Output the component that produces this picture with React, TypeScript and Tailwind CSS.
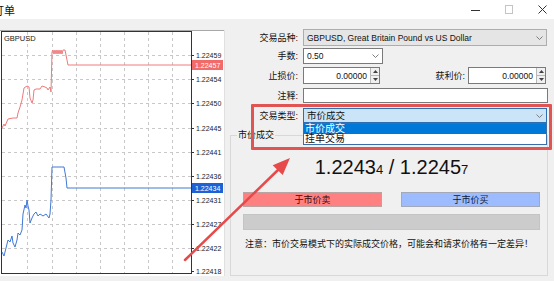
import React from "react";

const redPts =
  "2,128 4,124 5,126 8,119 13,118 17,118 18,113 20,107 22,100 24,88 27,86 29,87 30,98 32,103 33,100 34,90 36,89 40,89 42,86 45,87 47,88 48,90 50,87 51,92 52,52 53,50 54,54 55,50 56,54 57,50 58,54 59,50 60,54 61,50 62,54 63,50 65,50 67,60 68,65 191,65";
const bluePts =
  "2,252 4,256 6,248 8,240 10,242 12,236 13,243 15,247 17,240 18,233 20,235 22,230 23,214 25,205 26,208 27,200 28,206 29,210 30,223 32,218 34,214 36,212 38,216 40,214 43,216 46,214 49,218 50,214 51,200 52,167 64,167 66,178 67,188 191,188";

function Chart() {
  const vx = [27, 52, 76, 100, 124, 148, 172];
  const hy = [55, 79, 103, 128, 152, 176, 200, 224, 248];
  const labels: [number, string][] = [
    [55, "1.22459"],
    [79, "1.22454"],
    [103, "1.22450"],
    [128, "1.22445"],
    [152, "1.22441"],
    [176, "1.22436"],
    [200, "1.22431"],
    [224, "1.22427"],
    [248, "1.22422"],
    [271, "1.22418"],
  ];
  return (
    <svg width="225" height="246" viewBox="0 30 225 246" className="block">
      <rect x="0" y="30" width="225" height="246" fill="#ffffff" />
      <line x1="0" y1="30.5" x2="224" y2="30.5" stroke="#a8a8a8" />
      <line x1="224.5" y1="30" x2="224.5" y2="276" stroke="#e0e0e0" />
      {vx.map((x) => (
        <line key={"v" + x} x1={x + 0.5} y1="32" x2={x + 0.5} y2="273" stroke="#c8c8c8" strokeDasharray="3 3" />
      ))}
      {hy.map((y) => (
        <line key={"h" + y} x1="2" y1={y + 0.5} x2="191" y2={y + 0.5} stroke="#c8c8c8" strokeDasharray="3 3" />
      ))}
      <rect x="1.5" y="31.5" width="190" height="242" fill="none" stroke="#333333" />
      {labels.map(([y, t]) => (
        <g key={t}>
          <line x1="191" y1={y + 0.5} x2="194" y2={y + 0.5} stroke="#333" />
          <text x="196" y={y + 2.5} fontSize="7" fill="#222" fontFamily="Liberation Sans, sans-serif">
            {t}
          </text>
        </g>
      ))}
      <polyline points={redPts} fill="none" stroke="#f07a7a" strokeWidth="1" />
      <polyline points={bluePts} fill="none" stroke="#3f78d8" strokeWidth="1" />
      <rect x="192" y="60" width="31" height="10" fill="#f26b6b" />
      <text x="195" y="67.5" fontSize="7" fill="#fff" fontFamily="Liberation Sans, sans-serif">
        1.22457
      </text>
      <rect x="192" y="183" width="31" height="10" fill="#1d62d4" />
      <text x="195" y="190.5" fontSize="7" fill="#fff" fontFamily="Liberation Sans, sans-serif">
        1.22434
      </text>
      <text x="4" y="41" fontSize="7.5" fill="#222" fontFamily="Liberation Sans, sans-serif">
        GBPUSD
      </text>
    </svg>
  );
}

function Chevron() {
  return (
    <svg width="7" height="4" viewBox="0 0 7 4" className="block">
      <polyline points="0.5,0.5 3.5,3.5 6.5,0.5" fill="none" stroke="#707070" strokeWidth="0.9" />
    </svg>
  );
}

function Spin() {
  return (
    <div className="flex flex-col w-[9px] h-full border-l border-[#b8b8b8] bg-[#f0f0f0]">
      <div className="flex-1 flex items-center justify-center border-b border-[#b8b8b8]">
        <svg width="5" height="3" viewBox="0 0 5 3" className="block">
          <path d="M0 3 L2.5 0 L5 3Z" fill="#404040" />
        </svg>
      </div>
      <div className="flex-1 flex items-center justify-center">
        <svg width="5" height="3" viewBox="0 0 5 3" className="block">
          <path d="M0 0 L2.5 3 L5 0Z" fill="#404040" />
        </svg>
      </div>
    </div>
  );
}

function Label({ children }: { children: React.ReactNode }) {
  return <div className="w-[68px] text-right text-[9px] leading-[12px] text-[#111]">{children}</div>;
}

export default function App() {
  return (
    <div className="relative w-[554px] h-[281px] overflow-hidden bg-[#f0f0f0] flex flex-col font-['Liberation_Sans','Noto_Sans_CJK_SC',sans-serif] text-[#111]">
      {/* title bar */}
      <div className="h-[19px] bg-white flex items-center shrink-0">
        <div className="-ml-[7px] text-[11px] leading-[14px] text-[#111] font-['Noto_Sans_CJK_SC',sans-serif]">订单</div>
        <div className="ml-auto mr-[7px] flex items-center gap-[26px]">
          <svg width="9" height="9" viewBox="0 0 9 9" className="block">
            <line x1="0" y1="5.5" x2="9" y2="5.5" stroke="#333" />
          </svg>
          <svg width="8" height="9" viewBox="0 0 8 9" className="block -ml-[1px]">
            <rect x="0.5" y="0.5" width="7" height="8" fill="none" stroke="#c4c4c4" />
          </svg>
          <svg width="9" height="9" viewBox="0 0 9 9" className="block -ml-[1px]">
            <line x1="0.5" y1="0.5" x2="8.5" y2="8.5" stroke="#333" />
            <line x1="8.5" y1="0.5" x2="0.5" y2="8.5" stroke="#333" />
          </svg>
        </div>
      </div>

      {/* body */}
      <div className="flex flex-row flex-1">
        <div className="pt-[11px] w-[225px] shrink-0">
          <Chart />
        </div>

        <div className="ml-[5px] w-[324px] flex flex-col">
          {/* row 1 */}
          <div className="mt-[10px] flex items-center h-[17px]">
            <Label>交易品种:</Label>
            <div className="ml-[5px] w-[244px] h-[17px] flex items-center justify-between bg-[#e5e5e5] border border-[#adadad] px-[3px]">
              <span className="text-[8.5px] leading-[10px]">GBPUSD, Great Britain Pound vs US Dollar</span>
              <Chevron />
            </div>
          </div>
          {/* row 2 */}
          <div className="mt-[2px] flex items-center h-[16px]">
            <Label>手数:</Label>
            <div className="ml-[5px] w-[80px] h-[16px] flex items-center justify-between bg-white border border-[#7a7a7a] px-[3px]">
              <span className="text-[8.5px] leading-[10px]">0.50</span>
              <Chevron />
            </div>
          </div>
          {/* row 3 */}
          <div className="mt-[3px] flex items-center h-[17px]">
            <Label>止损价:</Label>
            <div className="ml-[5px] w-[77px] h-[17px] flex items-center bg-white border border-[#7a7a7a]">
              <span className="flex-1 text-right pr-[3px] text-[8.5px] leading-[10px]">0.00000</span>
              <Spin />
            </div>
            <div className="w-[85px] text-right text-[9px] leading-[12px]">获利价:</div>
            <div className="ml-[3px] w-[78px] h-[17px] flex items-center bg-white border border-[#7a7a7a]">
              <span className="flex-1 text-right pr-[3px] text-[8.5px] leading-[10px]">0.00000</span>
              <Spin />
            </div>
          </div>
          {/* row 4 */}
          <div className="mt-[4px] flex items-center h-[15px]">
            <Label>注释:</Label>
            <div className="ml-[5px] w-[245px] h-[15px] bg-white border border-[#7a7a7a]" />
          </div>
          {/* row 5 */}
          <div className="mt-[5px] flex items-center h-[15px] relative z-10">
            <Label>交易类型:</Label>
            <div className="relative ml-[5px] w-[244px] h-[15px] flex items-center justify-between bg-[#cce4f7] border border-[#2f6fb0] px-[3px]">
              <span className="text-[9.5px] leading-[12px]">市价成交</span>
              <Chevron />
              <div className="absolute left-[-1px] top-[14px] w-[244px] bg-white border border-[#3a6ea5] flex flex-col">
                <div className="h-[10px] bg-[#0078d7] text-white text-[10px] leading-[10px] px-[1px] overflow-visible whitespace-nowrap">市价成交</div>
                <div className="h-[10px] text-[10px] leading-[10px] px-[1px] whitespace-nowrap">挂单交易</div>
              </div>
            </div>
          </div>

          {/* group box */}
          <div className="mt-[12px] relative w-[318px] h-[141px] border border-[#d8d8d8] flex flex-col pl-[12px] pr-[7px]">
            <div className="absolute left-[6px] top-[-7px] bg-[#f0f0f0] px-[1px] text-[9px] leading-[12px]">市价成交</div>
            <div className="mt-[18px] h-[26px] flex items-baseline justify-center text-[#111]">
              <span className="text-[20px] leading-[26px]">1.2243</span>
              <span className="text-[13px]">4</span>
              <span className="text-[20px] leading-[26px] whitespace-pre"> / 1.2245</span>
              <span className="text-[13px]">7</span>
            </div>
            <div className="mt-[12px] flex gap-[19px]">
              <div className="w-[139px] h-[15px] bg-[#ff8080] border border-[#b9a3a3] flex items-center justify-center text-[9px] leading-[12px] text-[#3a0a0a]">于市价卖</div>
              <div className="w-[139px] h-[15px] bg-[#9cbcff] border border-[#a3a9b9] flex items-center justify-center text-[9px] leading-[12px] text-[#0a1a3a]">于市价买</div>
            </div>
            <div className="mt-[7px] w-[297px] h-[16px] bg-[#cccccc] border border-[#c4c4c4]" />
            <div className="mt-[8px] ml-[2px] text-[9px] leading-[12px] whitespace-nowrap">注意：市价交易模式下的实际成交价格，可能会和请求价格有一定差异！</div>
          </div>
        </div>
      </div>

      {/* red highlight box */}
      <div className="absolute left-[251px] top-[104px] w-[301px] h-[46px] border-[3px] border-[#e05454] rounded-[1px] z-20 pointer-events-none" />

      {/* red arrow */}
      <svg width="554" height="281" viewBox="0 0 554 281" className="absolute left-0 top-0 z-20 pointer-events-none">
        <line x1="185" y1="260" x2="279" y2="169" stroke="#e64a4a" strokeWidth="2.5" strokeLinecap="round" />
        <polygon points="290,158 282.7,175 272.7,165.3" fill="#e64a4a" />
      </svg>
    </div>
  );
}
